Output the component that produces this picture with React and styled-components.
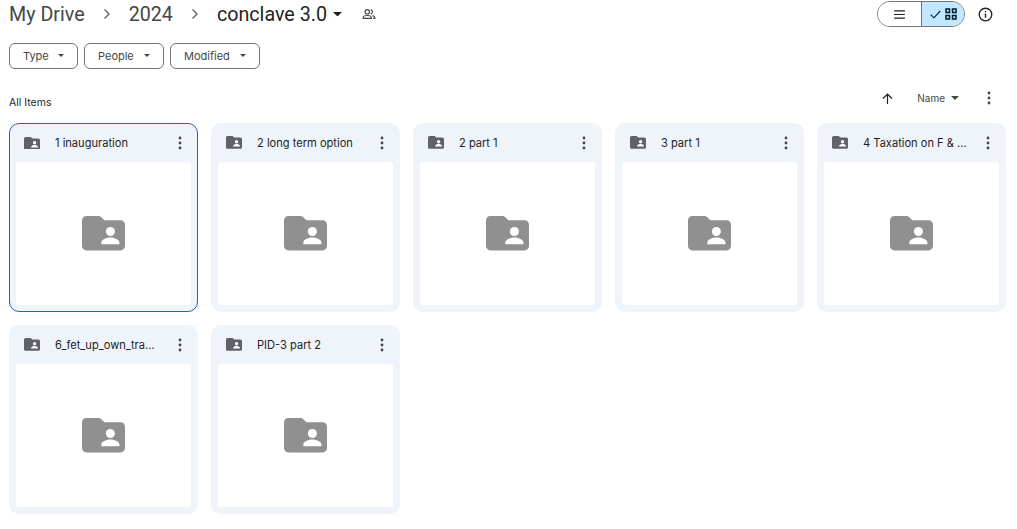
import React from 'react'
import styled, { createGlobalStyle } from 'styled-components'

const GlobalStyle = createGlobalStyle`
  html, body { margin: 0; padding: 0; background: #fff; overflow: hidden; }
  * { box-sizing: border-box; }
`

const folders = [
  { id: 1, name: '1 inauguration', selected: true },
  { id: 2, name: '2 long term option' },
  { id: 3, name: '2 part 1' },
  { id: 4, name: '3 part 1' },
  { id: 5, name: '4 Taxation on F & ...' },
  { id: 6, name: '6_fet_up_own_tra...' },
  { id: 7, name: 'PID-3 part 2' },
]

const SharedFolder = ({ size, color, cut = '#fff' }) => (
  <svg width={size} height={size * 0.8} viewBox="0 0 20 16">
    <path fill={color} d="M2 0h5.600c.5 0 1 .2 1.400.6L10.400 2H18c1.100 0 2 .9 2 2v10c0 1.100-.9 2-2 2H2c-1.100 0-2-.9-2-2V2C0 .9.900 0 2 0z" />
    <circle fill={cut} cx="13.200" cy="7.200" r="2.100" />
    <path fill={cut} d="M9 13.200v-.9c0-1.500 2.800-2.300 4.200-2.300s4.200.8 4.200 2.300v.9H9z" />
  </svg>
)

const Caret = ({ width = 8, color = '#444746' }) => (
  <svg width={width} height={width / 2} viewBox="0 0 8 4">
    <path fill={color} d="M0 0h8L4 4z" />
  </svg>
)

const Chevron = () => (
  <svg width="24" height="24" viewBox="0 0 24 24">
    <path fill="none" stroke="#5f6368" strokeWidth="1.400" d="M9.500 7.500 14 12l-4.500 4.500" />
  </svg>
)

const Dots = ({ color = '#444746' }) => (
  <svg width="4" height="14" viewBox="0 0 4 14">
    <circle fill={color} cx="2" cy="2" r="1.400" />
    <circle fill={color} cx="2" cy="7" r="1.400" />
    <circle fill={color} cx="2" cy="12" r="1.400" />
  </svg>
)

const App = () => {
  return (
    <Page>
      <GlobalStyle />
      <TopRow>
        <Crumbs>
          <Crumb>My Drive</Crumb>
          <Sep><Chevron /></Sep>
          <Crumb>2024</Crumb>
          <Sep><Chevron /></Sep>
          <Crumb $current>conclave 3.0</Crumb>
          <TitleCaret><Caret width={9} color="#1f1f1f" /></TitleCaret>
          <PeopleIcon width="14" height="14" viewBox="0 0 24 24">
            <path fill="none" stroke="#444746" strokeWidth="2" d="M9 12a3.800 3.800 0 1 0 0-7.600A3.800 3.800 0 0 0 9 12zM2 19.500v-1.700C2 15.500 6 14.500 9 14.500s7 1 7 3.300v1.700H2zM15 4.500a3.800 3.800 0 0 1 0 7.400M18 14.800c2.300.5 4 1.500 4 3v1.700h-3" />
          </PeopleIcon>
        </Crumbs>
        <ViewTools>
          <Toggle>
            <ToggleHalf>
              <svg width="11" height="9" viewBox="0 0 12 10">
                <path fill="none" stroke="#1f1f1f" strokeWidth="1.300" d="M0 1h12M0 5h12M0 9h12" />
              </svg>
            </ToggleHalf>
            <ToggleHalf $active>
              <svg width="11" height="9" viewBox="0 0 11 9">
                <path fill="none" stroke="#001d35" strokeWidth="1.100" d="M.7 4.700 3.900 7.800 10.300 1" />
              </svg>
              <svg width="12" height="12" viewBox="0 0 12 12">
                <path fill="none" stroke="#001d35" strokeWidth="1.500" d="M1 1h3.500v3.500H1zM7.500 1H11v3.500H7.500zM1 7.500h3.500V11H1zM7.500 7.500H11V11H7.500z" />
              </svg>
            </ToggleHalf>
          </Toggle>
          <InfoIcon width="15" height="15" viewBox="0 0 16 16">
            <circle cx="8" cy="8" r="6.700" fill="none" stroke="#1f1f1f" strokeWidth="1.400" />
            <path stroke="#1f1f1f" strokeWidth="1.500" d="M8 7v4.500M8 4.200v1.500" />
          </InfoIcon>
        </ViewTools>
      </TopRow>

      <Filters>
        <FilterButton $w={69}>Type<Caret width={6} /></FilterButton>
        <FilterButton $w={80}>People<Caret width={6} /></FilterButton>
        <FilterButton $w={90}>Modified<Caret width={6} /></FilterButton>
      </Filters>

      <ListHead>
        <AllItems>All Items</AllItems>
        <SortTools>
          <svg width="11" height="11" viewBox="0 0 11 11">
            <path fill="none" stroke="#1f1f1f" strokeWidth="1.200" d="M5.500 11V1M1 5.500l4.500-4.500 4.500 4.500" />
          </svg>
          <SortName>Name<Caret width={8} /></SortName>
          <Dots />
        </SortTools>
      </ListHead>

      <Grid>
        {folders.map((f) => (
          <Card key={f.id} $selected={f.selected}>
            <CardHead $selected={f.selected}>
              <SharedFolder size={16} color="#5f6368" />
              <CardName>{f.name}</CardName>
              <Dots />
            </CardHead>
            <Preview>
              <SharedFolder size={43} color="#909090" />
            </Preview>
          </Card>
        ))}
      </Grid>
    </Page>
  )
}

const Page = styled.div`
  width: 1017px;
  height: 529px;
  overflow: hidden;
  padding: 0 10px 0 9px;
  font-family: Inter, Roboto, "Liberation Sans", sans-serif;
  color: #1f1f1f;
`

const TopRow = styled.div`
  height: 28px;
  display: flex;
  align-items: center;
  justify-content: space-between;
`

const Crumbs = styled.div`
  display: flex;
  align-items: center;
`

const Crumb = styled.span`
  font-family: Roboto, "Open Sans", sans-serif;
  font-size: 19.700px;
  color: ${(p) => (p.$current ? '#1f1f1f' : '#444746')};
`

const Sep = styled.span`
  display: flex;
  width: 44px;
  justify-content: center;
`

const TitleCaret = styled.span`
  display: flex;
  margin-left: 6px;
`

const PeopleIcon = styled.svg`
  margin-left: 20px;
`

const ViewTools = styled.div`
  display: flex;
  align-items: center;
  gap: 13px;
  padding-right: 14px;
`

const Toggle = styled.div`
  width: 88px;
  height: 26px;
  display: flex;
  border: 1px solid #747775;
  border-radius: 13px;
  overflow: hidden;
`

const ToggleHalf = styled.div`
  flex: 0 0 43px;
  display: flex;
  align-items: center;
  justify-content: center;
  gap: 4px;
  background: ${(p) => (p.$active ? '#c2e7ff' : '#fff')};
  border-left: ${(p) => (p.$active ? '1px solid #747775' : 'none')};
`

const InfoIcon = styled.svg`
  display: block;
`

const Filters = styled.div`
  display: flex;
  gap: 6px;
  margin-top: 15px;
`

const FilterButton = styled.div`
  width: ${(p) => p.$w}px;
  height: 26px;
  display: flex;
  align-items: center;
  justify-content: space-between;
  padding: 0 13px 1px 13px;
  border: 1px solid #747775;
  border-radius: 6px;
  font-size: 11px;
  color: #444746;
`

const ListHead = styled.div`
  height: 54px;
  display: flex;
  align-items: center;
  justify-content: space-between;
  padding-top: 12px;
`

const AllItems = styled.span`
  font-size: 10.500px;
`

const SortTools = styled.div`
  display: flex;
  align-items: center;
  padding-right: 16px;
  margin-bottom: 8px;
`

const SortName = styled.span`
  display: flex;
  align-items: center;
  gap: 6px;
  font-size: 10px;
  color: #444746;
  margin: 0 28px 0 24px;
`

const Grid = styled.div`
  display: grid;
  grid-template-columns: repeat(5, 189px);
  grid-auto-rows: 189px;
  gap: 13px;
`

const Card = styled.div`
  display: flex;
  flex-direction: column;
  background: #eff3fa;
  border-radius: 10px;
  border: ${(p) => (p.$selected ? '1px solid #1a5fe0' : 'none')};
  padding: ${(p) => (p.$selected ? '0 6px 6px' : '0 7px 7px')};
`

const CardHead = styled.div`
  height: ${(p) => (p.$selected ? '38px' : '39px')};
  flex: none;
  display: flex;
  align-items: center;
  padding: 0 9px 0 8px;
`

const CardName = styled.span`
  flex: 1;
  min-width: 0;
  margin-left: 15px;
  font-size: 11.100px;
  color: #1f1f1f;
  white-space: nowrap;
`

const Preview = styled.div`
  flex: 1;
  display: flex;
  align-items: center;
  justify-content: center;
  background: #fff;
  border-radius: 3px;
`

export default App
